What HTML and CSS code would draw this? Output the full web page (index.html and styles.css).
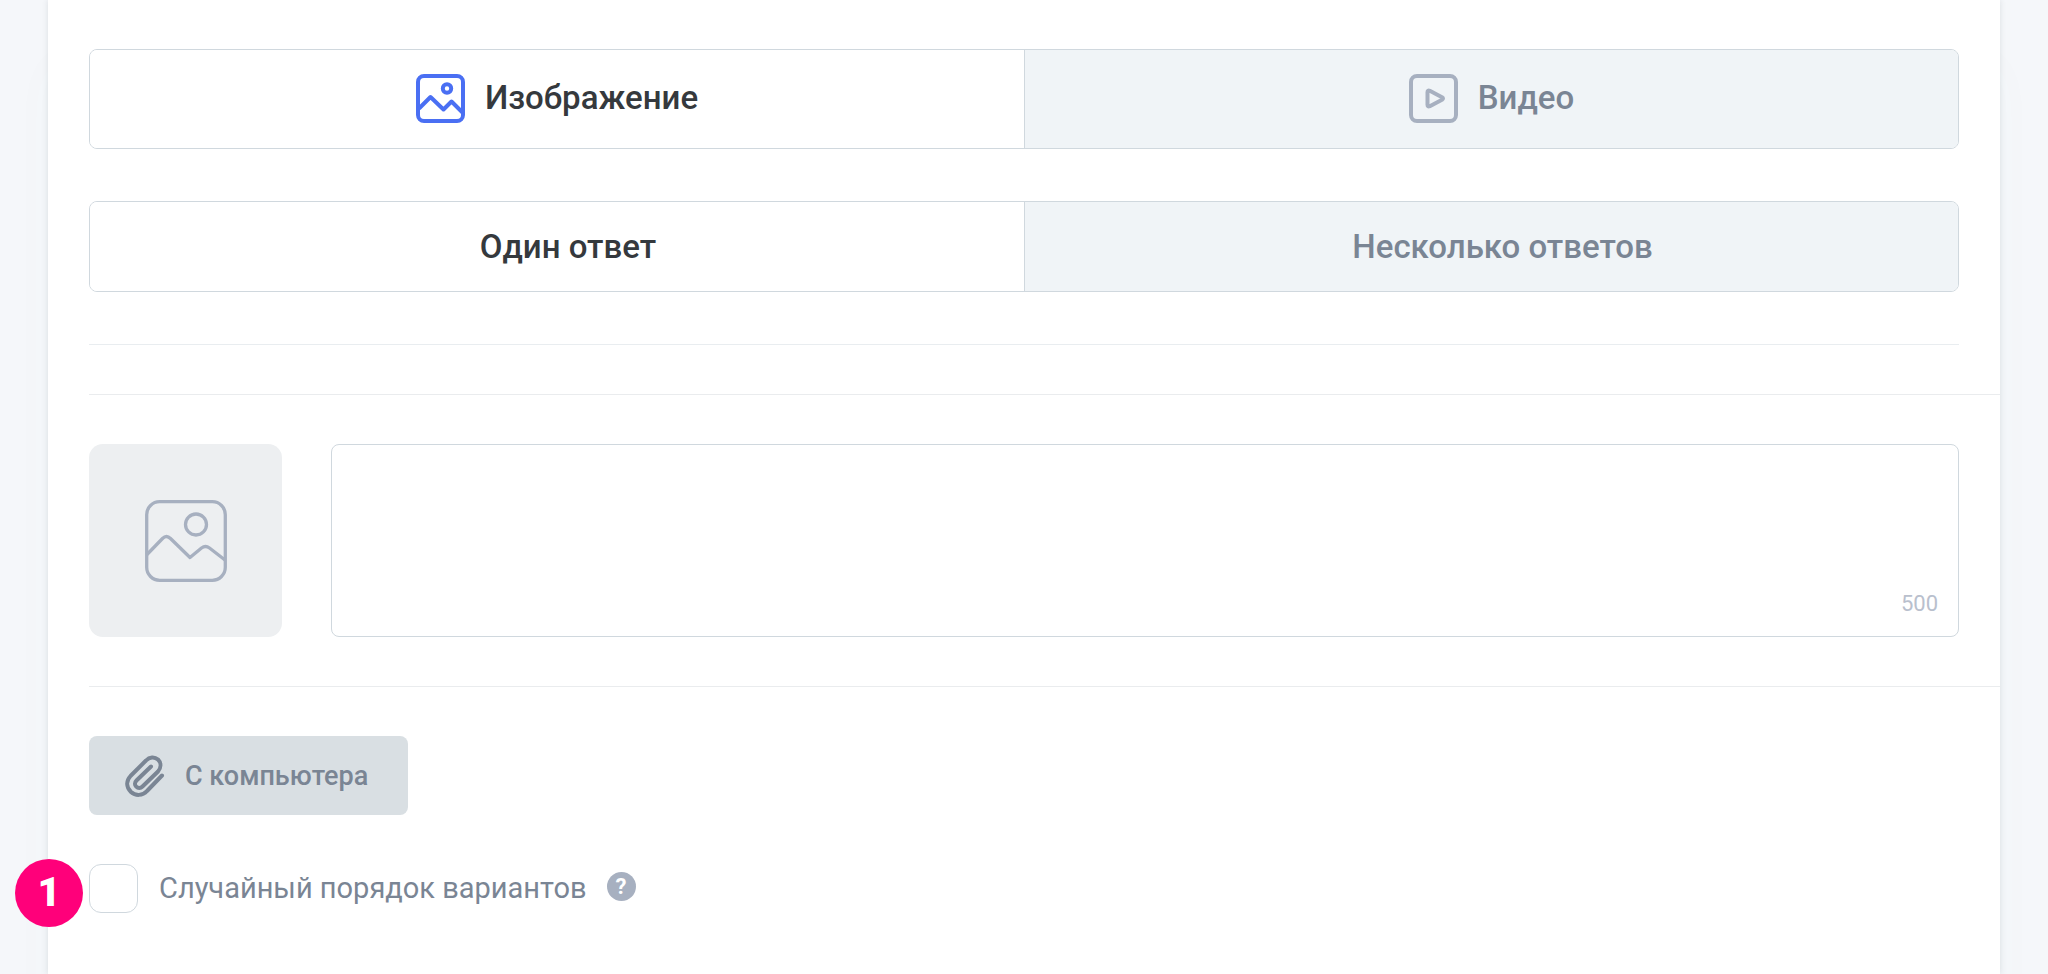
FILE: index.html
```html
<!DOCTYPE html>
<html lang="ru">
<head>
<meta charset="utf-8">
<meta name="viewport" content="width=device-width, initial-scale=1">
<title>Варианты ответа</title>
<link rel="stylesheet" href="styles.css">
</head>
<body>
<main class="card">
  <div class="segment segment-media" role="group" aria-label="Тип медиа">
    <button class="segment-item is-active" type="button" aria-pressed="true">
      <svg class="segment-icon" viewBox="0 0 49 49" fill="none" stroke="currentColor" stroke-width="4" stroke-linejoin="round" aria-hidden="true">
        <rect x="2" y="2" width="45" height="45" rx="6"/>
        <circle cx="31" cy="14.500" r="4.200"/>
        <path d="M3 34.500L14.500 23L27.500 35.500L35.500 27.500L46.500 38.500"/>
      </svg>
      <span>Изображение</span>
    </button>
    <button class="segment-item" type="button" aria-pressed="false">
      <svg class="segment-icon" viewBox="0 0 49 49" fill="none" stroke="currentColor" stroke-width="4" stroke-linejoin="round" aria-hidden="true">
        <rect x="2" y="2" width="45" height="45" rx="6"/>
        <path d="M18.500 18.200Q18.500 15.800 20.800 16.800L33 23.200Q35 24.500 33 25.800L20.800 32.200Q18.500 33.200 18.500 30.800Z"/>
      </svg>
      <span>Видео</span>
    </button>
  </div>

  <div class="segment segment-mode" role="group" aria-label="Количество ответов">
    <button class="segment-item is-active" type="button" aria-pressed="true">Один ответ</button>
    <button class="segment-item" type="button" aria-pressed="false">Несколько ответов</button>
  </div>

  <hr class="divider">

  <section class="answer">
    <button class="preview" type="button" aria-label="Добавить изображение">
      <svg class="preview-icon" viewBox="0 0 82 82" fill="none" stroke="currentColor" stroke-width="3.300" stroke-linejoin="round" aria-hidden="true">
        <rect x="1.700" y="1.700" width="78.600" height="78.600" rx="13"/>
        <circle cx="51" cy="24.500" r="10.500"/>
        <path d="M2 54.500L17.500 38.500Q21.500 34.500 25.500 38.500L45 57.500L56.500 48Q60.500 45 64.500 48L80 60"/>
      </svg>
    </button>
    <div class="field">
      <textarea class="field-input" aria-label="Вариант ответа" maxlength="500"></textarea>
      <span class="field-counter">500</span>
    </div>
  </section>

  <button class="upload" type="button">
    <svg class="upload-icon" viewBox="0 0 40 42" fill="none" stroke="currentColor" stroke-width="4" stroke-linecap="round" stroke-linejoin="round" aria-hidden="true">
      <path d="M37 20.500L22 36C17.500 41 10.500 41 6 37C1 32 1 26 5.500 21L21 5.500C24.500 1.800 29.500 1.500 33 4.500C36.500 8 36 13 33 16.500L17.500 31.500C15.500 33.500 13 33.500 11.200 31.700C9.500 30 9.500 27.500 11.500 25.500L26 11.500"/>
    </svg>
    <span>С компьютера</span>
  </button>

  <div class="option">
    <input class="option-box" type="checkbox" id="shuffle">
    <label class="option-label" for="shuffle">Случайный порядок вариантов</label>
    <button class="help" type="button" aria-label="Подсказка">?</button>
    <span class="marker">1</span>
  </div>
</main>
</body>
</html>
```

FILE: styles.css
```css
* {
  box-sizing: border-box;
}

body {
  margin: 0;
  background: #f5f7fa;
  font-family: Roboto, "Noto Sans", sans-serif;
  color: #7a8594;
}

button,
textarea {
  font: inherit;
  color: inherit;
}

.card {
  display: flex;
  flex-direction: column;
  min-height: 100vh;
  margin: 0 48px;
  padding: 49px 41px 60px;
  background: #fff;
  box-shadow: 0 0 6px rgba(60, 70, 80, 0.14), 0 60px 50px rgba(90, 130, 160, 0.02);
}

.segment {
  display: grid;
  grid-template-columns: 1fr 1fr;
  border: 1px solid #d0d8de;
  border-radius: 8px;
  overflow: hidden;
  font-size: 33px;
  font-weight: 500;
  line-height: 40px;
}

.segment-media {
  min-height: 100px;
}

.segment-mode {
  min-height: 91px;
  margin-top: 52px;
}

.segment-item {
  display: flex;
  align-items: center;
  justify-content: center;
  gap: 20px;
  padding: 0 16px 2px;
  border: 0;
  background: #f0f4f7;
}

.segment-mode .segment-item {
  padding: 0 0 0 22px;
}

.segment-item + .segment-item {
  border-left: 1px solid #d0d8de;
}

.segment-item.is-active {
  background: #fff;
  color: #35393d;
}

.segment-icon {
  width: 49px;
  height: 49px;
  color: #a7b0c0;
}

.is-active .segment-icon {
  color: #4a6ff3;
}

.divider {
  width: 100%;
  height: 1px;
  margin: 52px 0 49px;
  border: 0;
  background: #e9edf0;
}

.answer {
  display: flex;
  gap: 49px;
  margin-right: -41px;
  padding: 49px 41px 49px 0;
  border: solid #eaecee;
  border-width: 1px 0;
}

.preview {
  display: grid;
  place-items: center;
  flex: none;
  width: 193px;
  height: 193px;
  padding: 0;
  border: 0;
  border-radius: 14px;
  background: #edeff1;
}

.preview-icon {
  width: 82px;
  height: 82px;
  color: #a7b0c0;
}

.field {
  position: relative;
  display: flex;
  flex: 1;
}

.field-input {
  flex: 1;
  padding: 20px;
  border: 1px solid #d0d8de;
  border-radius: 8px;
  background: #fff;
  font-size: 29px;
  resize: none;
}

.field-counter {
  position: absolute;
  right: 21px;
  bottom: 19px;
  font-size: 22px;
  line-height: 28px;
  color: #b9c0cd;
}

.upload {
  display: flex;
  align-items: center;
  align-self: flex-start;
  gap: 20px;
  min-height: 79px;
  margin-top: 49px;
  padding: 0 40px 0 36px;
  border: 0;
  border-radius: 8px;
  background: #d9dfe3;
  font-size: 27px;
  font-weight: 500;
}

.upload-icon {
  width: 40px;
  height: 42px;
}

.option {
  position: relative;
  display: flex;
  align-items: center;
  align-self: flex-start;
  margin-top: 49px;
}

.option-box {
  width: 49px;
  height: 49px;
  margin: 0;
  border: 1px solid #d0d8de;
  border-radius: 12px;
  background: #fff;
  appearance: none;
}

.option-box:checked {
  background: #4a6ff3;
}

.option-label {
  padding: 0 20px 2px 21px;
  font-size: 29px;
  line-height: 40px;
}

.help {
  width: 29px;
  height: 29px;
  margin-bottom: 4px;
  padding: 0;
  border: 0;
  border-radius: 50%;
  background: #a7b0c0;
  color: #fff;
  font-size: 22px;
  font-weight: 700;
  line-height: 29px;
}

.marker {
  position: absolute;
  top: -5px;
  left: -74px;
  width: 68px;
  height: 68px;
  border-radius: 50%;
  background: #ff007a;
  color: #fff;
  font-size: 40px;
  font-weight: 900;
  line-height: 68px;
  text-align: center;
}
```
